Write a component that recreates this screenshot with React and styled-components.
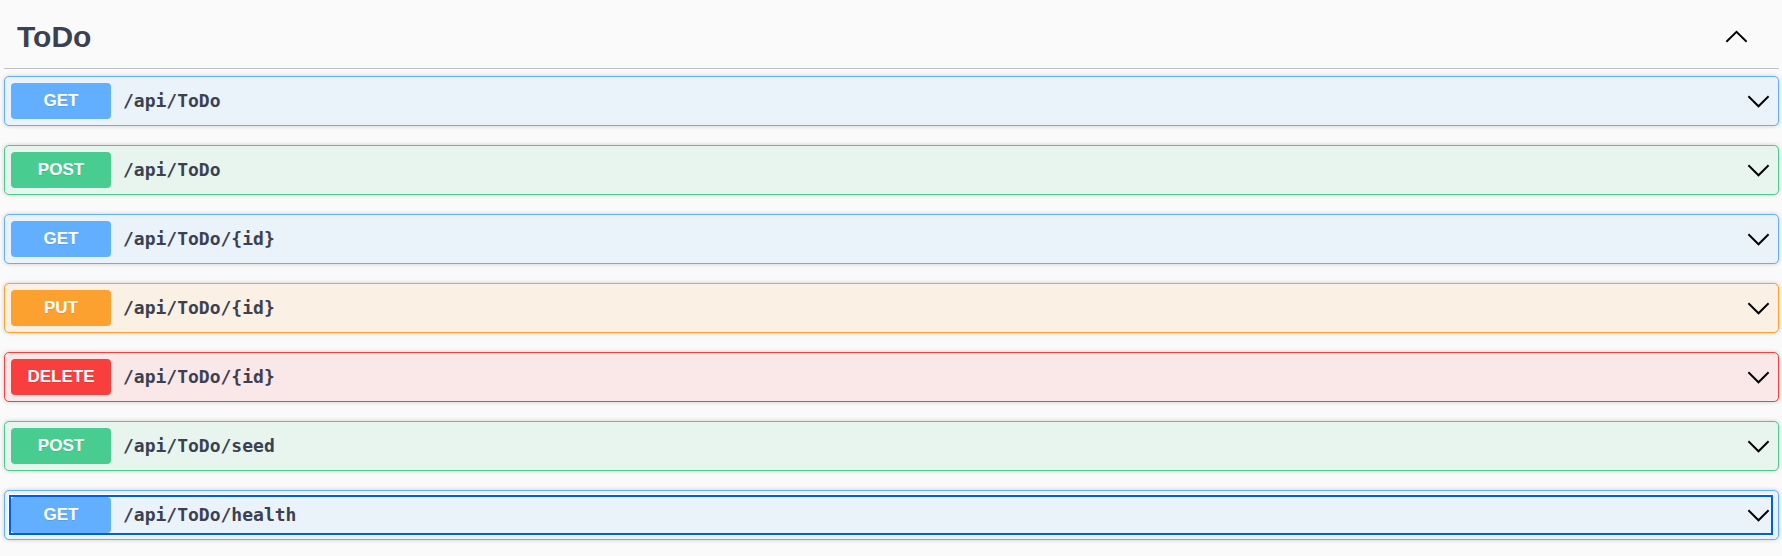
import React, { useState } from "react";
import styled, { createGlobalStyle, css } from "styled-components";

const GlobalStyle = createGlobalStyle`
  * { box-sizing: border-box; }
  body {
    margin: 0;
    background: #fafafa;
    color: #3b4151;
    font-family: "Liberation Sans", Arial, sans-serif;
  }
`;

const tones = {
  GET: { solid: "#61affe", soft: "#eaf2fa" },
  POST: { solid: "#49cc90", soft: "#e8f5ee" },
  PUT: { solid: "#fca130", soft: "#faf0e3" },
  DELETE: { solid: "#f93e3e", soft: "#fae7e7" },
};

const operations = [
  { method: "GET", path: "/api/ToDo" },
  { method: "POST", path: "/api/ToDo" },
  { method: "GET", path: "/api/ToDo/{id}" },
  { method: "PUT", path: "/api/ToDo/{id}" },
  { method: "DELETE", path: "/api/ToDo/{id}" },
  { method: "POST", path: "/api/ToDo/seed" },
  { method: "GET", path: "/api/ToDo/health", active: true },
];

const Section = styled.section`
  padding: 0 3px 14px 4px;
`;

const TagHeader = styled.header`
  display: flex;
  align-items: center;
  justify-content: space-between;
  padding: 20px 30px 14px 13px;
  border-bottom: 1px solid rgba(59, 65, 81, 0.3);
`;

const TagTitle = styled.h3`
  margin: 0;
  font-size: 30px;
  line-height: 34px;
  font-weight: 700;
`;

const TagLink = styled.a`
  color: inherit;
  text-decoration: none;
`;

const CollapseButton = styled.button`
  display: flex;
  padding: 0;
  border: 0;
  background: none;
  color: #000;
  cursor: pointer;
`;

const OperationList = styled.div`
  display: flex;
  flex-direction: column;
  gap: 19px;
  padding-top: 7px;
`;

const Operation = styled.div`
  padding: 6px 7px 6px 6px;
  border: 1px solid ${(p) => p.$tone.solid};
  border-radius: 5px;
  background: ${(p) => p.$tone.soft};
  box-shadow: 0 0 4px rgba(0, 0, 0, 0.19);
`;

const focusRing = css`
  outline: 2px solid #005fe0;
  box-shadow: 0 0 0 3px #fff;
`;

const Summary = styled.button`
  display: flex;
  align-items: center;
  width: 100%;
  padding: 0;
  border: 0;
  background: ${(p) => p.$tone.soft};
  color: inherit;
  text-align: left;
  cursor: pointer;
  outline: none;
  ${(p) => p.$active && focusRing}
  &:focus-visible {
    ${focusRing}
  }
`;

const Method = styled.span`
  flex: none;
  width: 100px;
  padding: 8px 0;
  border-radius: 4px;
  background: ${(p) => p.$tone.solid};
  color: #fff;
  font: 700 17px/20px "Liberation Sans", Arial, sans-serif;
  text-align: center;
  text-shadow: 0 1px 0 rgba(0, 0, 0, 0.1);
`;

const Path = styled.span`
  flex: 1;
  min-width: 0;
  padding: 0 12px;
  font: 700 18px/24px "DejaVu Sans Mono", monospace;
  overflow-wrap: anywhere;
`;

const ChevronIcon = styled.svg`
  flex: none;
  width: 25px;
  height: 25px;
`;

function Chevron({ up }) {
  return (
    <ChevronIcon viewBox="0 0 25 25" aria-hidden="true">
      <path
        d={up ? "M2.4 16.8 12.5 6.8 22.6 16.8" : "M2.4 7.3 12.5 17.3 22.6 7.3"}
        fill="none"
        stroke="#000"
        strokeWidth="1.9"
      />
    </ChevronIcon>
  );
}

export default function App() {
  const [open, setOpen] = useState(true);
  return (
    <>
      <GlobalStyle />
      <Section id="todo">
        <TagHeader>
          <TagTitle>
            <TagLink href="#todo">ToDo</TagLink>
          </TagTitle>
          <CollapseButton
            type="button"
            aria-label="Toggle ToDo operations"
            aria-expanded={open}
            onClick={() => setOpen(!open)}
          >
            <Chevron up={open} />
          </CollapseButton>
        </TagHeader>
        {open && (
          <OperationList>
            {operations.map(({ method, path, active }) => {
              const tone = tones[method];
              return (
                <Operation key={method + path} $tone={tone}>
                  <Summary type="button" $tone={tone} $active={active}>
                    <Method $tone={tone}>{method}</Method>
                    <Path>{path}</Path>
                    <Chevron />
                  </Summary>
                </Operation>
              );
            })}
          </OperationList>
        )}
      </Section>
    </>
  );
}
